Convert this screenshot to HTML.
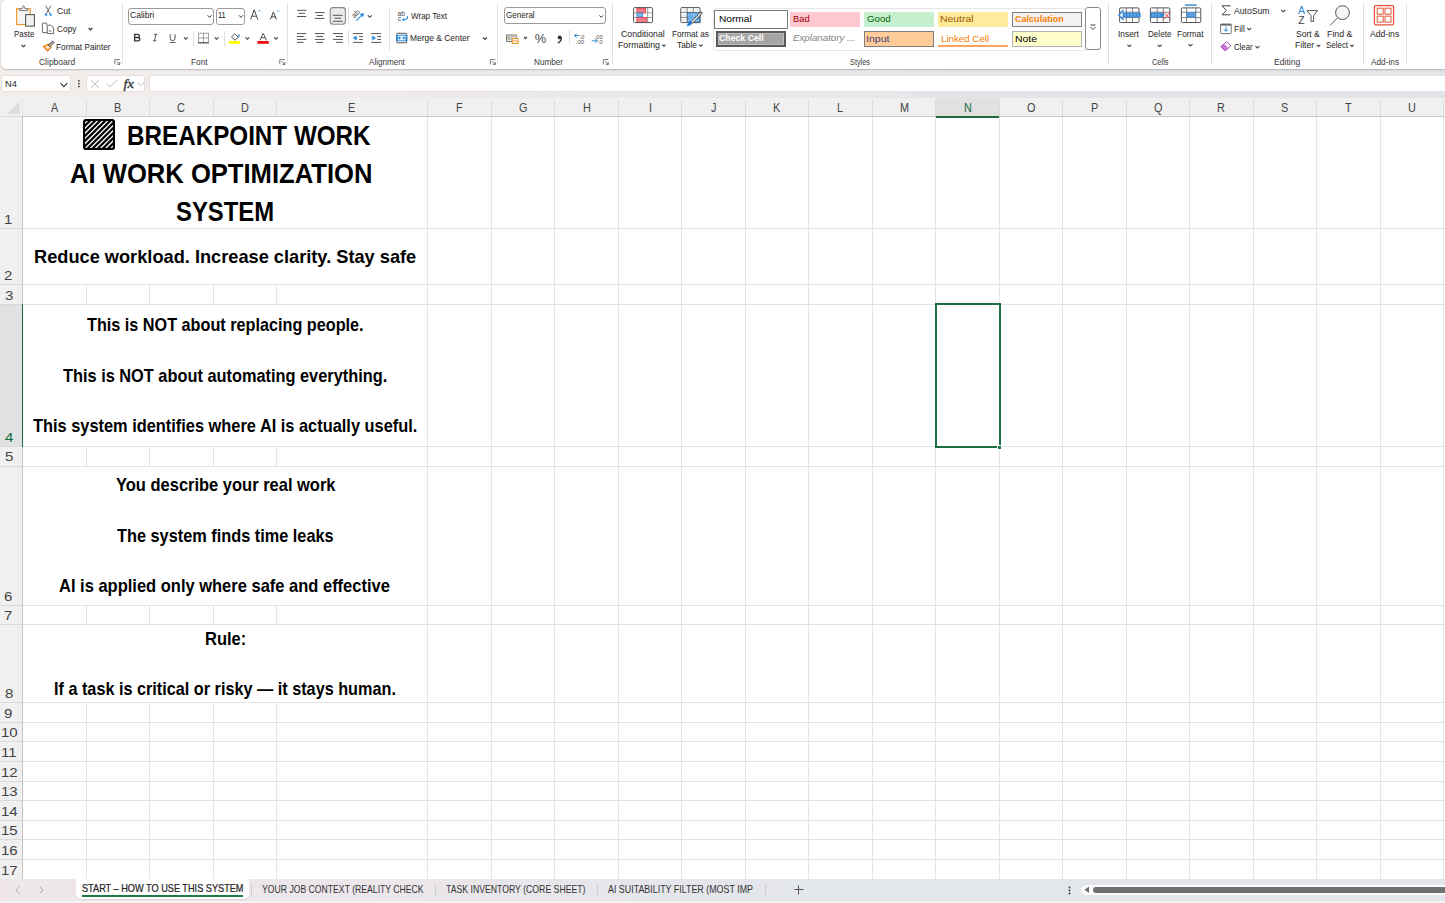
<!DOCTYPE html><html><head><meta charset="utf-8"><style>
*{box-sizing:border-box}
html,body{margin:0;padding:0;width:1445px;height:903px;overflow:hidden;background:#fff;font-family:"Liberation Sans",sans-serif}
.t{position:absolute;white-space:pre;transform-origin:0 0}
.a{position:absolute}
.sep{position:absolute;width:1px;background:#e0e0e0}
svg{position:absolute;overflow:visible}
</style></head><body>
<div class="a" style="left:0;top:0;width:1445px;height:117px;background:linear-gradient(90deg,#f3eeea 0%,#efe9e9 30%,#e9e7ec 55%,#e2e5ea 70%,#e2e5ea 100%)"></div>
<div class="a" style="left:1px;top:0px;width:1460px;height:69px;background:#fff;border-radius:5px 0 0 5px;box-shadow:0 0.6px 1.6px rgba(0,0,0,0.22)"></div>
<div class="a" style="left:1px;top:75px;width:70.3px;height:17.3px;background:#fff;border:1px solid #e4e0dd;border-radius:3px"></div>
<div class="a" style="left:86.3px;top:75px;width:59px;height:17.3px;background:#fff;border:1px solid #e4e0dd;border-radius:3px"></div>
<div class="a" style="left:149.2px;top:75px;width:1300px;height:17.3px;background:#fff;border:1px solid #e4e2e4;border-radius:3px"></div>
<div class="a" style="left:0;top:98px;width:1445px;height:19px;background:#f0f0f0"></div>
<div class="a" style="left:0;top:117px;width:22.5px;height:762px;background:#f0f0f0"></div>
<div class="a" style="left:935.8px;top:98px;width:63.5px;height:19px;background:#e1e1e1"></div>
<div class="a" style="left:0;top:304.4px;width:22.5px;height:142.20000000000005px;background:#e1e1e1"></div>
<svg style="left:0;top:98px" width="22" height="19"><polygon points="19.8,3.2 19.8,16 6.5,16" fill="#dddddd"/></svg>
<div class="a" style="left:85.50px;top:100px;width:1px;height:16px;background:#dcdcdc"></div>
<div class="a" style="left:85.50px;top:284.40px;width:1px;height:20.00px;background:#e4e4e4"></div>
<div class="a" style="left:85.50px;top:446.60px;width:1px;height:19.40px;background:#e4e4e4"></div>
<div class="a" style="left:85.50px;top:605.60px;width:1px;height:18.90px;background:#e4e4e4"></div>
<div class="a" style="left:85.50px;top:702.70px;width:1px;height:19.60px;background:#e4e4e4"></div>
<div class="a" style="left:85.50px;top:722.30px;width:1px;height:19.60px;background:#e4e4e4"></div>
<div class="a" style="left:85.50px;top:741.90px;width:1px;height:19.60px;background:#e4e4e4"></div>
<div class="a" style="left:85.50px;top:761.50px;width:1px;height:19.60px;background:#e4e4e4"></div>
<div class="a" style="left:85.50px;top:781.10px;width:1px;height:19.60px;background:#e4e4e4"></div>
<div class="a" style="left:85.50px;top:800.70px;width:1px;height:19.60px;background:#e4e4e4"></div>
<div class="a" style="left:85.50px;top:820.30px;width:1px;height:19.60px;background:#e4e4e4"></div>
<div class="a" style="left:85.50px;top:839.90px;width:1px;height:19.60px;background:#e4e4e4"></div>
<div class="a" style="left:85.50px;top:859.50px;width:1px;height:19.60px;background:#e4e4e4"></div>
<div class="a" style="left:149.00px;top:100px;width:1px;height:16px;background:#dcdcdc"></div>
<div class="a" style="left:149.00px;top:284.40px;width:1px;height:20.00px;background:#e4e4e4"></div>
<div class="a" style="left:149.00px;top:446.60px;width:1px;height:19.40px;background:#e4e4e4"></div>
<div class="a" style="left:149.00px;top:605.60px;width:1px;height:18.90px;background:#e4e4e4"></div>
<div class="a" style="left:149.00px;top:702.70px;width:1px;height:19.60px;background:#e4e4e4"></div>
<div class="a" style="left:149.00px;top:722.30px;width:1px;height:19.60px;background:#e4e4e4"></div>
<div class="a" style="left:149.00px;top:741.90px;width:1px;height:19.60px;background:#e4e4e4"></div>
<div class="a" style="left:149.00px;top:761.50px;width:1px;height:19.60px;background:#e4e4e4"></div>
<div class="a" style="left:149.00px;top:781.10px;width:1px;height:19.60px;background:#e4e4e4"></div>
<div class="a" style="left:149.00px;top:800.70px;width:1px;height:19.60px;background:#e4e4e4"></div>
<div class="a" style="left:149.00px;top:820.30px;width:1px;height:19.60px;background:#e4e4e4"></div>
<div class="a" style="left:149.00px;top:839.90px;width:1px;height:19.60px;background:#e4e4e4"></div>
<div class="a" style="left:149.00px;top:859.50px;width:1px;height:19.60px;background:#e4e4e4"></div>
<div class="a" style="left:212.50px;top:100px;width:1px;height:16px;background:#dcdcdc"></div>
<div class="a" style="left:212.50px;top:284.40px;width:1px;height:20.00px;background:#e4e4e4"></div>
<div class="a" style="left:212.50px;top:446.60px;width:1px;height:19.40px;background:#e4e4e4"></div>
<div class="a" style="left:212.50px;top:605.60px;width:1px;height:18.90px;background:#e4e4e4"></div>
<div class="a" style="left:212.50px;top:702.70px;width:1px;height:19.60px;background:#e4e4e4"></div>
<div class="a" style="left:212.50px;top:722.30px;width:1px;height:19.60px;background:#e4e4e4"></div>
<div class="a" style="left:212.50px;top:741.90px;width:1px;height:19.60px;background:#e4e4e4"></div>
<div class="a" style="left:212.50px;top:761.50px;width:1px;height:19.60px;background:#e4e4e4"></div>
<div class="a" style="left:212.50px;top:781.10px;width:1px;height:19.60px;background:#e4e4e4"></div>
<div class="a" style="left:212.50px;top:800.70px;width:1px;height:19.60px;background:#e4e4e4"></div>
<div class="a" style="left:212.50px;top:820.30px;width:1px;height:19.60px;background:#e4e4e4"></div>
<div class="a" style="left:212.50px;top:839.90px;width:1px;height:19.60px;background:#e4e4e4"></div>
<div class="a" style="left:212.50px;top:859.50px;width:1px;height:19.60px;background:#e4e4e4"></div>
<div class="a" style="left:276.00px;top:100px;width:1px;height:16px;background:#dcdcdc"></div>
<div class="a" style="left:276.00px;top:284.40px;width:1px;height:20.00px;background:#e4e4e4"></div>
<div class="a" style="left:276.00px;top:446.60px;width:1px;height:19.40px;background:#e4e4e4"></div>
<div class="a" style="left:276.00px;top:605.60px;width:1px;height:18.90px;background:#e4e4e4"></div>
<div class="a" style="left:276.00px;top:702.70px;width:1px;height:19.60px;background:#e4e4e4"></div>
<div class="a" style="left:276.00px;top:722.30px;width:1px;height:19.60px;background:#e4e4e4"></div>
<div class="a" style="left:276.00px;top:741.90px;width:1px;height:19.60px;background:#e4e4e4"></div>
<div class="a" style="left:276.00px;top:761.50px;width:1px;height:19.60px;background:#e4e4e4"></div>
<div class="a" style="left:276.00px;top:781.10px;width:1px;height:19.60px;background:#e4e4e4"></div>
<div class="a" style="left:276.00px;top:800.70px;width:1px;height:19.60px;background:#e4e4e4"></div>
<div class="a" style="left:276.00px;top:820.30px;width:1px;height:19.60px;background:#e4e4e4"></div>
<div class="a" style="left:276.00px;top:839.90px;width:1px;height:19.60px;background:#e4e4e4"></div>
<div class="a" style="left:276.00px;top:859.50px;width:1px;height:19.60px;background:#e4e4e4"></div>
<div class="a" style="left:427.30px;top:100px;width:1px;height:16px;background:#dcdcdc"></div>
<div class="a" style="left:427.30px;top:116.50px;width:1px;height:111.80px;background:#e4e4e4"></div>
<div class="a" style="left:427.30px;top:228.30px;width:1px;height:56.10px;background:#e4e4e4"></div>
<div class="a" style="left:427.30px;top:284.40px;width:1px;height:20.00px;background:#e4e4e4"></div>
<div class="a" style="left:427.30px;top:304.40px;width:1px;height:142.20px;background:#e4e4e4"></div>
<div class="a" style="left:427.30px;top:446.60px;width:1px;height:19.40px;background:#e4e4e4"></div>
<div class="a" style="left:427.30px;top:466.00px;width:1px;height:139.60px;background:#e4e4e4"></div>
<div class="a" style="left:427.30px;top:605.60px;width:1px;height:18.90px;background:#e4e4e4"></div>
<div class="a" style="left:427.30px;top:624.50px;width:1px;height:78.20px;background:#e4e4e4"></div>
<div class="a" style="left:427.30px;top:702.70px;width:1px;height:19.60px;background:#e4e4e4"></div>
<div class="a" style="left:427.30px;top:722.30px;width:1px;height:19.60px;background:#e4e4e4"></div>
<div class="a" style="left:427.30px;top:741.90px;width:1px;height:19.60px;background:#e4e4e4"></div>
<div class="a" style="left:427.30px;top:761.50px;width:1px;height:19.60px;background:#e4e4e4"></div>
<div class="a" style="left:427.30px;top:781.10px;width:1px;height:19.60px;background:#e4e4e4"></div>
<div class="a" style="left:427.30px;top:800.70px;width:1px;height:19.60px;background:#e4e4e4"></div>
<div class="a" style="left:427.30px;top:820.30px;width:1px;height:19.60px;background:#e4e4e4"></div>
<div class="a" style="left:427.30px;top:839.90px;width:1px;height:19.60px;background:#e4e4e4"></div>
<div class="a" style="left:427.30px;top:859.50px;width:1px;height:19.60px;background:#e4e4e4"></div>
<div class="a" style="left:490.80px;top:100px;width:1px;height:16px;background:#dcdcdc"></div>
<div class="a" style="left:490.80px;top:116.50px;width:1px;height:111.80px;background:#e4e4e4"></div>
<div class="a" style="left:490.80px;top:228.30px;width:1px;height:56.10px;background:#e4e4e4"></div>
<div class="a" style="left:490.80px;top:284.40px;width:1px;height:20.00px;background:#e4e4e4"></div>
<div class="a" style="left:490.80px;top:304.40px;width:1px;height:142.20px;background:#e4e4e4"></div>
<div class="a" style="left:490.80px;top:446.60px;width:1px;height:19.40px;background:#e4e4e4"></div>
<div class="a" style="left:490.80px;top:466.00px;width:1px;height:139.60px;background:#e4e4e4"></div>
<div class="a" style="left:490.80px;top:605.60px;width:1px;height:18.90px;background:#e4e4e4"></div>
<div class="a" style="left:490.80px;top:624.50px;width:1px;height:78.20px;background:#e4e4e4"></div>
<div class="a" style="left:490.80px;top:702.70px;width:1px;height:19.60px;background:#e4e4e4"></div>
<div class="a" style="left:490.80px;top:722.30px;width:1px;height:19.60px;background:#e4e4e4"></div>
<div class="a" style="left:490.80px;top:741.90px;width:1px;height:19.60px;background:#e4e4e4"></div>
<div class="a" style="left:490.80px;top:761.50px;width:1px;height:19.60px;background:#e4e4e4"></div>
<div class="a" style="left:490.80px;top:781.10px;width:1px;height:19.60px;background:#e4e4e4"></div>
<div class="a" style="left:490.80px;top:800.70px;width:1px;height:19.60px;background:#e4e4e4"></div>
<div class="a" style="left:490.80px;top:820.30px;width:1px;height:19.60px;background:#e4e4e4"></div>
<div class="a" style="left:490.80px;top:839.90px;width:1px;height:19.60px;background:#e4e4e4"></div>
<div class="a" style="left:490.80px;top:859.50px;width:1px;height:19.60px;background:#e4e4e4"></div>
<div class="a" style="left:554.30px;top:100px;width:1px;height:16px;background:#dcdcdc"></div>
<div class="a" style="left:554.30px;top:116.50px;width:1px;height:111.80px;background:#e4e4e4"></div>
<div class="a" style="left:554.30px;top:228.30px;width:1px;height:56.10px;background:#e4e4e4"></div>
<div class="a" style="left:554.30px;top:284.40px;width:1px;height:20.00px;background:#e4e4e4"></div>
<div class="a" style="left:554.30px;top:304.40px;width:1px;height:142.20px;background:#e4e4e4"></div>
<div class="a" style="left:554.30px;top:446.60px;width:1px;height:19.40px;background:#e4e4e4"></div>
<div class="a" style="left:554.30px;top:466.00px;width:1px;height:139.60px;background:#e4e4e4"></div>
<div class="a" style="left:554.30px;top:605.60px;width:1px;height:18.90px;background:#e4e4e4"></div>
<div class="a" style="left:554.30px;top:624.50px;width:1px;height:78.20px;background:#e4e4e4"></div>
<div class="a" style="left:554.30px;top:702.70px;width:1px;height:19.60px;background:#e4e4e4"></div>
<div class="a" style="left:554.30px;top:722.30px;width:1px;height:19.60px;background:#e4e4e4"></div>
<div class="a" style="left:554.30px;top:741.90px;width:1px;height:19.60px;background:#e4e4e4"></div>
<div class="a" style="left:554.30px;top:761.50px;width:1px;height:19.60px;background:#e4e4e4"></div>
<div class="a" style="left:554.30px;top:781.10px;width:1px;height:19.60px;background:#e4e4e4"></div>
<div class="a" style="left:554.30px;top:800.70px;width:1px;height:19.60px;background:#e4e4e4"></div>
<div class="a" style="left:554.30px;top:820.30px;width:1px;height:19.60px;background:#e4e4e4"></div>
<div class="a" style="left:554.30px;top:839.90px;width:1px;height:19.60px;background:#e4e4e4"></div>
<div class="a" style="left:554.30px;top:859.50px;width:1px;height:19.60px;background:#e4e4e4"></div>
<div class="a" style="left:617.80px;top:100px;width:1px;height:16px;background:#dcdcdc"></div>
<div class="a" style="left:617.80px;top:116.50px;width:1px;height:111.80px;background:#e4e4e4"></div>
<div class="a" style="left:617.80px;top:228.30px;width:1px;height:56.10px;background:#e4e4e4"></div>
<div class="a" style="left:617.80px;top:284.40px;width:1px;height:20.00px;background:#e4e4e4"></div>
<div class="a" style="left:617.80px;top:304.40px;width:1px;height:142.20px;background:#e4e4e4"></div>
<div class="a" style="left:617.80px;top:446.60px;width:1px;height:19.40px;background:#e4e4e4"></div>
<div class="a" style="left:617.80px;top:466.00px;width:1px;height:139.60px;background:#e4e4e4"></div>
<div class="a" style="left:617.80px;top:605.60px;width:1px;height:18.90px;background:#e4e4e4"></div>
<div class="a" style="left:617.80px;top:624.50px;width:1px;height:78.20px;background:#e4e4e4"></div>
<div class="a" style="left:617.80px;top:702.70px;width:1px;height:19.60px;background:#e4e4e4"></div>
<div class="a" style="left:617.80px;top:722.30px;width:1px;height:19.60px;background:#e4e4e4"></div>
<div class="a" style="left:617.80px;top:741.90px;width:1px;height:19.60px;background:#e4e4e4"></div>
<div class="a" style="left:617.80px;top:761.50px;width:1px;height:19.60px;background:#e4e4e4"></div>
<div class="a" style="left:617.80px;top:781.10px;width:1px;height:19.60px;background:#e4e4e4"></div>
<div class="a" style="left:617.80px;top:800.70px;width:1px;height:19.60px;background:#e4e4e4"></div>
<div class="a" style="left:617.80px;top:820.30px;width:1px;height:19.60px;background:#e4e4e4"></div>
<div class="a" style="left:617.80px;top:839.90px;width:1px;height:19.60px;background:#e4e4e4"></div>
<div class="a" style="left:617.80px;top:859.50px;width:1px;height:19.60px;background:#e4e4e4"></div>
<div class="a" style="left:681.30px;top:100px;width:1px;height:16px;background:#dcdcdc"></div>
<div class="a" style="left:681.30px;top:116.50px;width:1px;height:111.80px;background:#e4e4e4"></div>
<div class="a" style="left:681.30px;top:228.30px;width:1px;height:56.10px;background:#e4e4e4"></div>
<div class="a" style="left:681.30px;top:284.40px;width:1px;height:20.00px;background:#e4e4e4"></div>
<div class="a" style="left:681.30px;top:304.40px;width:1px;height:142.20px;background:#e4e4e4"></div>
<div class="a" style="left:681.30px;top:446.60px;width:1px;height:19.40px;background:#e4e4e4"></div>
<div class="a" style="left:681.30px;top:466.00px;width:1px;height:139.60px;background:#e4e4e4"></div>
<div class="a" style="left:681.30px;top:605.60px;width:1px;height:18.90px;background:#e4e4e4"></div>
<div class="a" style="left:681.30px;top:624.50px;width:1px;height:78.20px;background:#e4e4e4"></div>
<div class="a" style="left:681.30px;top:702.70px;width:1px;height:19.60px;background:#e4e4e4"></div>
<div class="a" style="left:681.30px;top:722.30px;width:1px;height:19.60px;background:#e4e4e4"></div>
<div class="a" style="left:681.30px;top:741.90px;width:1px;height:19.60px;background:#e4e4e4"></div>
<div class="a" style="left:681.30px;top:761.50px;width:1px;height:19.60px;background:#e4e4e4"></div>
<div class="a" style="left:681.30px;top:781.10px;width:1px;height:19.60px;background:#e4e4e4"></div>
<div class="a" style="left:681.30px;top:800.70px;width:1px;height:19.60px;background:#e4e4e4"></div>
<div class="a" style="left:681.30px;top:820.30px;width:1px;height:19.60px;background:#e4e4e4"></div>
<div class="a" style="left:681.30px;top:839.90px;width:1px;height:19.60px;background:#e4e4e4"></div>
<div class="a" style="left:681.30px;top:859.50px;width:1px;height:19.60px;background:#e4e4e4"></div>
<div class="a" style="left:744.80px;top:100px;width:1px;height:16px;background:#dcdcdc"></div>
<div class="a" style="left:744.80px;top:116.50px;width:1px;height:111.80px;background:#e4e4e4"></div>
<div class="a" style="left:744.80px;top:228.30px;width:1px;height:56.10px;background:#e4e4e4"></div>
<div class="a" style="left:744.80px;top:284.40px;width:1px;height:20.00px;background:#e4e4e4"></div>
<div class="a" style="left:744.80px;top:304.40px;width:1px;height:142.20px;background:#e4e4e4"></div>
<div class="a" style="left:744.80px;top:446.60px;width:1px;height:19.40px;background:#e4e4e4"></div>
<div class="a" style="left:744.80px;top:466.00px;width:1px;height:139.60px;background:#e4e4e4"></div>
<div class="a" style="left:744.80px;top:605.60px;width:1px;height:18.90px;background:#e4e4e4"></div>
<div class="a" style="left:744.80px;top:624.50px;width:1px;height:78.20px;background:#e4e4e4"></div>
<div class="a" style="left:744.80px;top:702.70px;width:1px;height:19.60px;background:#e4e4e4"></div>
<div class="a" style="left:744.80px;top:722.30px;width:1px;height:19.60px;background:#e4e4e4"></div>
<div class="a" style="left:744.80px;top:741.90px;width:1px;height:19.60px;background:#e4e4e4"></div>
<div class="a" style="left:744.80px;top:761.50px;width:1px;height:19.60px;background:#e4e4e4"></div>
<div class="a" style="left:744.80px;top:781.10px;width:1px;height:19.60px;background:#e4e4e4"></div>
<div class="a" style="left:744.80px;top:800.70px;width:1px;height:19.60px;background:#e4e4e4"></div>
<div class="a" style="left:744.80px;top:820.30px;width:1px;height:19.60px;background:#e4e4e4"></div>
<div class="a" style="left:744.80px;top:839.90px;width:1px;height:19.60px;background:#e4e4e4"></div>
<div class="a" style="left:744.80px;top:859.50px;width:1px;height:19.60px;background:#e4e4e4"></div>
<div class="a" style="left:808.30px;top:100px;width:1px;height:16px;background:#dcdcdc"></div>
<div class="a" style="left:808.30px;top:116.50px;width:1px;height:111.80px;background:#e4e4e4"></div>
<div class="a" style="left:808.30px;top:228.30px;width:1px;height:56.10px;background:#e4e4e4"></div>
<div class="a" style="left:808.30px;top:284.40px;width:1px;height:20.00px;background:#e4e4e4"></div>
<div class="a" style="left:808.30px;top:304.40px;width:1px;height:142.20px;background:#e4e4e4"></div>
<div class="a" style="left:808.30px;top:446.60px;width:1px;height:19.40px;background:#e4e4e4"></div>
<div class="a" style="left:808.30px;top:466.00px;width:1px;height:139.60px;background:#e4e4e4"></div>
<div class="a" style="left:808.30px;top:605.60px;width:1px;height:18.90px;background:#e4e4e4"></div>
<div class="a" style="left:808.30px;top:624.50px;width:1px;height:78.20px;background:#e4e4e4"></div>
<div class="a" style="left:808.30px;top:702.70px;width:1px;height:19.60px;background:#e4e4e4"></div>
<div class="a" style="left:808.30px;top:722.30px;width:1px;height:19.60px;background:#e4e4e4"></div>
<div class="a" style="left:808.30px;top:741.90px;width:1px;height:19.60px;background:#e4e4e4"></div>
<div class="a" style="left:808.30px;top:761.50px;width:1px;height:19.60px;background:#e4e4e4"></div>
<div class="a" style="left:808.30px;top:781.10px;width:1px;height:19.60px;background:#e4e4e4"></div>
<div class="a" style="left:808.30px;top:800.70px;width:1px;height:19.60px;background:#e4e4e4"></div>
<div class="a" style="left:808.30px;top:820.30px;width:1px;height:19.60px;background:#e4e4e4"></div>
<div class="a" style="left:808.30px;top:839.90px;width:1px;height:19.60px;background:#e4e4e4"></div>
<div class="a" style="left:808.30px;top:859.50px;width:1px;height:19.60px;background:#e4e4e4"></div>
<div class="a" style="left:871.80px;top:100px;width:1px;height:16px;background:#dcdcdc"></div>
<div class="a" style="left:871.80px;top:116.50px;width:1px;height:111.80px;background:#e4e4e4"></div>
<div class="a" style="left:871.80px;top:228.30px;width:1px;height:56.10px;background:#e4e4e4"></div>
<div class="a" style="left:871.80px;top:284.40px;width:1px;height:20.00px;background:#e4e4e4"></div>
<div class="a" style="left:871.80px;top:304.40px;width:1px;height:142.20px;background:#e4e4e4"></div>
<div class="a" style="left:871.80px;top:446.60px;width:1px;height:19.40px;background:#e4e4e4"></div>
<div class="a" style="left:871.80px;top:466.00px;width:1px;height:139.60px;background:#e4e4e4"></div>
<div class="a" style="left:871.80px;top:605.60px;width:1px;height:18.90px;background:#e4e4e4"></div>
<div class="a" style="left:871.80px;top:624.50px;width:1px;height:78.20px;background:#e4e4e4"></div>
<div class="a" style="left:871.80px;top:702.70px;width:1px;height:19.60px;background:#e4e4e4"></div>
<div class="a" style="left:871.80px;top:722.30px;width:1px;height:19.60px;background:#e4e4e4"></div>
<div class="a" style="left:871.80px;top:741.90px;width:1px;height:19.60px;background:#e4e4e4"></div>
<div class="a" style="left:871.80px;top:761.50px;width:1px;height:19.60px;background:#e4e4e4"></div>
<div class="a" style="left:871.80px;top:781.10px;width:1px;height:19.60px;background:#e4e4e4"></div>
<div class="a" style="left:871.80px;top:800.70px;width:1px;height:19.60px;background:#e4e4e4"></div>
<div class="a" style="left:871.80px;top:820.30px;width:1px;height:19.60px;background:#e4e4e4"></div>
<div class="a" style="left:871.80px;top:839.90px;width:1px;height:19.60px;background:#e4e4e4"></div>
<div class="a" style="left:871.80px;top:859.50px;width:1px;height:19.60px;background:#e4e4e4"></div>
<div class="a" style="left:935.30px;top:100px;width:1px;height:16px;background:#dcdcdc"></div>
<div class="a" style="left:935.30px;top:116.50px;width:1px;height:111.80px;background:#e4e4e4"></div>
<div class="a" style="left:935.30px;top:228.30px;width:1px;height:56.10px;background:#e4e4e4"></div>
<div class="a" style="left:935.30px;top:284.40px;width:1px;height:20.00px;background:#e4e4e4"></div>
<div class="a" style="left:935.30px;top:304.40px;width:1px;height:142.20px;background:#e4e4e4"></div>
<div class="a" style="left:935.30px;top:446.60px;width:1px;height:19.40px;background:#e4e4e4"></div>
<div class="a" style="left:935.30px;top:466.00px;width:1px;height:139.60px;background:#e4e4e4"></div>
<div class="a" style="left:935.30px;top:605.60px;width:1px;height:18.90px;background:#e4e4e4"></div>
<div class="a" style="left:935.30px;top:624.50px;width:1px;height:78.20px;background:#e4e4e4"></div>
<div class="a" style="left:935.30px;top:702.70px;width:1px;height:19.60px;background:#e4e4e4"></div>
<div class="a" style="left:935.30px;top:722.30px;width:1px;height:19.60px;background:#e4e4e4"></div>
<div class="a" style="left:935.30px;top:741.90px;width:1px;height:19.60px;background:#e4e4e4"></div>
<div class="a" style="left:935.30px;top:761.50px;width:1px;height:19.60px;background:#e4e4e4"></div>
<div class="a" style="left:935.30px;top:781.10px;width:1px;height:19.60px;background:#e4e4e4"></div>
<div class="a" style="left:935.30px;top:800.70px;width:1px;height:19.60px;background:#e4e4e4"></div>
<div class="a" style="left:935.30px;top:820.30px;width:1px;height:19.60px;background:#e4e4e4"></div>
<div class="a" style="left:935.30px;top:839.90px;width:1px;height:19.60px;background:#e4e4e4"></div>
<div class="a" style="left:935.30px;top:859.50px;width:1px;height:19.60px;background:#e4e4e4"></div>
<div class="a" style="left:998.80px;top:100px;width:1px;height:16px;background:#dcdcdc"></div>
<div class="a" style="left:998.80px;top:116.50px;width:1px;height:111.80px;background:#e4e4e4"></div>
<div class="a" style="left:998.80px;top:228.30px;width:1px;height:56.10px;background:#e4e4e4"></div>
<div class="a" style="left:998.80px;top:284.40px;width:1px;height:20.00px;background:#e4e4e4"></div>
<div class="a" style="left:998.80px;top:304.40px;width:1px;height:142.20px;background:#e4e4e4"></div>
<div class="a" style="left:998.80px;top:446.60px;width:1px;height:19.40px;background:#e4e4e4"></div>
<div class="a" style="left:998.80px;top:466.00px;width:1px;height:139.60px;background:#e4e4e4"></div>
<div class="a" style="left:998.80px;top:605.60px;width:1px;height:18.90px;background:#e4e4e4"></div>
<div class="a" style="left:998.80px;top:624.50px;width:1px;height:78.20px;background:#e4e4e4"></div>
<div class="a" style="left:998.80px;top:702.70px;width:1px;height:19.60px;background:#e4e4e4"></div>
<div class="a" style="left:998.80px;top:722.30px;width:1px;height:19.60px;background:#e4e4e4"></div>
<div class="a" style="left:998.80px;top:741.90px;width:1px;height:19.60px;background:#e4e4e4"></div>
<div class="a" style="left:998.80px;top:761.50px;width:1px;height:19.60px;background:#e4e4e4"></div>
<div class="a" style="left:998.80px;top:781.10px;width:1px;height:19.60px;background:#e4e4e4"></div>
<div class="a" style="left:998.80px;top:800.70px;width:1px;height:19.60px;background:#e4e4e4"></div>
<div class="a" style="left:998.80px;top:820.30px;width:1px;height:19.60px;background:#e4e4e4"></div>
<div class="a" style="left:998.80px;top:839.90px;width:1px;height:19.60px;background:#e4e4e4"></div>
<div class="a" style="left:998.80px;top:859.50px;width:1px;height:19.60px;background:#e4e4e4"></div>
<div class="a" style="left:1062.30px;top:100px;width:1px;height:16px;background:#dcdcdc"></div>
<div class="a" style="left:1062.30px;top:116.50px;width:1px;height:111.80px;background:#e4e4e4"></div>
<div class="a" style="left:1062.30px;top:228.30px;width:1px;height:56.10px;background:#e4e4e4"></div>
<div class="a" style="left:1062.30px;top:284.40px;width:1px;height:20.00px;background:#e4e4e4"></div>
<div class="a" style="left:1062.30px;top:304.40px;width:1px;height:142.20px;background:#e4e4e4"></div>
<div class="a" style="left:1062.30px;top:446.60px;width:1px;height:19.40px;background:#e4e4e4"></div>
<div class="a" style="left:1062.30px;top:466.00px;width:1px;height:139.60px;background:#e4e4e4"></div>
<div class="a" style="left:1062.30px;top:605.60px;width:1px;height:18.90px;background:#e4e4e4"></div>
<div class="a" style="left:1062.30px;top:624.50px;width:1px;height:78.20px;background:#e4e4e4"></div>
<div class="a" style="left:1062.30px;top:702.70px;width:1px;height:19.60px;background:#e4e4e4"></div>
<div class="a" style="left:1062.30px;top:722.30px;width:1px;height:19.60px;background:#e4e4e4"></div>
<div class="a" style="left:1062.30px;top:741.90px;width:1px;height:19.60px;background:#e4e4e4"></div>
<div class="a" style="left:1062.30px;top:761.50px;width:1px;height:19.60px;background:#e4e4e4"></div>
<div class="a" style="left:1062.30px;top:781.10px;width:1px;height:19.60px;background:#e4e4e4"></div>
<div class="a" style="left:1062.30px;top:800.70px;width:1px;height:19.60px;background:#e4e4e4"></div>
<div class="a" style="left:1062.30px;top:820.30px;width:1px;height:19.60px;background:#e4e4e4"></div>
<div class="a" style="left:1062.30px;top:839.90px;width:1px;height:19.60px;background:#e4e4e4"></div>
<div class="a" style="left:1062.30px;top:859.50px;width:1px;height:19.60px;background:#e4e4e4"></div>
<div class="a" style="left:1125.80px;top:100px;width:1px;height:16px;background:#dcdcdc"></div>
<div class="a" style="left:1125.80px;top:116.50px;width:1px;height:111.80px;background:#e4e4e4"></div>
<div class="a" style="left:1125.80px;top:228.30px;width:1px;height:56.10px;background:#e4e4e4"></div>
<div class="a" style="left:1125.80px;top:284.40px;width:1px;height:20.00px;background:#e4e4e4"></div>
<div class="a" style="left:1125.80px;top:304.40px;width:1px;height:142.20px;background:#e4e4e4"></div>
<div class="a" style="left:1125.80px;top:446.60px;width:1px;height:19.40px;background:#e4e4e4"></div>
<div class="a" style="left:1125.80px;top:466.00px;width:1px;height:139.60px;background:#e4e4e4"></div>
<div class="a" style="left:1125.80px;top:605.60px;width:1px;height:18.90px;background:#e4e4e4"></div>
<div class="a" style="left:1125.80px;top:624.50px;width:1px;height:78.20px;background:#e4e4e4"></div>
<div class="a" style="left:1125.80px;top:702.70px;width:1px;height:19.60px;background:#e4e4e4"></div>
<div class="a" style="left:1125.80px;top:722.30px;width:1px;height:19.60px;background:#e4e4e4"></div>
<div class="a" style="left:1125.80px;top:741.90px;width:1px;height:19.60px;background:#e4e4e4"></div>
<div class="a" style="left:1125.80px;top:761.50px;width:1px;height:19.60px;background:#e4e4e4"></div>
<div class="a" style="left:1125.80px;top:781.10px;width:1px;height:19.60px;background:#e4e4e4"></div>
<div class="a" style="left:1125.80px;top:800.70px;width:1px;height:19.60px;background:#e4e4e4"></div>
<div class="a" style="left:1125.80px;top:820.30px;width:1px;height:19.60px;background:#e4e4e4"></div>
<div class="a" style="left:1125.80px;top:839.90px;width:1px;height:19.60px;background:#e4e4e4"></div>
<div class="a" style="left:1125.80px;top:859.50px;width:1px;height:19.60px;background:#e4e4e4"></div>
<div class="a" style="left:1189.30px;top:100px;width:1px;height:16px;background:#dcdcdc"></div>
<div class="a" style="left:1189.30px;top:116.50px;width:1px;height:111.80px;background:#e4e4e4"></div>
<div class="a" style="left:1189.30px;top:228.30px;width:1px;height:56.10px;background:#e4e4e4"></div>
<div class="a" style="left:1189.30px;top:284.40px;width:1px;height:20.00px;background:#e4e4e4"></div>
<div class="a" style="left:1189.30px;top:304.40px;width:1px;height:142.20px;background:#e4e4e4"></div>
<div class="a" style="left:1189.30px;top:446.60px;width:1px;height:19.40px;background:#e4e4e4"></div>
<div class="a" style="left:1189.30px;top:466.00px;width:1px;height:139.60px;background:#e4e4e4"></div>
<div class="a" style="left:1189.30px;top:605.60px;width:1px;height:18.90px;background:#e4e4e4"></div>
<div class="a" style="left:1189.30px;top:624.50px;width:1px;height:78.20px;background:#e4e4e4"></div>
<div class="a" style="left:1189.30px;top:702.70px;width:1px;height:19.60px;background:#e4e4e4"></div>
<div class="a" style="left:1189.30px;top:722.30px;width:1px;height:19.60px;background:#e4e4e4"></div>
<div class="a" style="left:1189.30px;top:741.90px;width:1px;height:19.60px;background:#e4e4e4"></div>
<div class="a" style="left:1189.30px;top:761.50px;width:1px;height:19.60px;background:#e4e4e4"></div>
<div class="a" style="left:1189.30px;top:781.10px;width:1px;height:19.60px;background:#e4e4e4"></div>
<div class="a" style="left:1189.30px;top:800.70px;width:1px;height:19.60px;background:#e4e4e4"></div>
<div class="a" style="left:1189.30px;top:820.30px;width:1px;height:19.60px;background:#e4e4e4"></div>
<div class="a" style="left:1189.30px;top:839.90px;width:1px;height:19.60px;background:#e4e4e4"></div>
<div class="a" style="left:1189.30px;top:859.50px;width:1px;height:19.60px;background:#e4e4e4"></div>
<div class="a" style="left:1252.80px;top:100px;width:1px;height:16px;background:#dcdcdc"></div>
<div class="a" style="left:1252.80px;top:116.50px;width:1px;height:111.80px;background:#e4e4e4"></div>
<div class="a" style="left:1252.80px;top:228.30px;width:1px;height:56.10px;background:#e4e4e4"></div>
<div class="a" style="left:1252.80px;top:284.40px;width:1px;height:20.00px;background:#e4e4e4"></div>
<div class="a" style="left:1252.80px;top:304.40px;width:1px;height:142.20px;background:#e4e4e4"></div>
<div class="a" style="left:1252.80px;top:446.60px;width:1px;height:19.40px;background:#e4e4e4"></div>
<div class="a" style="left:1252.80px;top:466.00px;width:1px;height:139.60px;background:#e4e4e4"></div>
<div class="a" style="left:1252.80px;top:605.60px;width:1px;height:18.90px;background:#e4e4e4"></div>
<div class="a" style="left:1252.80px;top:624.50px;width:1px;height:78.20px;background:#e4e4e4"></div>
<div class="a" style="left:1252.80px;top:702.70px;width:1px;height:19.60px;background:#e4e4e4"></div>
<div class="a" style="left:1252.80px;top:722.30px;width:1px;height:19.60px;background:#e4e4e4"></div>
<div class="a" style="left:1252.80px;top:741.90px;width:1px;height:19.60px;background:#e4e4e4"></div>
<div class="a" style="left:1252.80px;top:761.50px;width:1px;height:19.60px;background:#e4e4e4"></div>
<div class="a" style="left:1252.80px;top:781.10px;width:1px;height:19.60px;background:#e4e4e4"></div>
<div class="a" style="left:1252.80px;top:800.70px;width:1px;height:19.60px;background:#e4e4e4"></div>
<div class="a" style="left:1252.80px;top:820.30px;width:1px;height:19.60px;background:#e4e4e4"></div>
<div class="a" style="left:1252.80px;top:839.90px;width:1px;height:19.60px;background:#e4e4e4"></div>
<div class="a" style="left:1252.80px;top:859.50px;width:1px;height:19.60px;background:#e4e4e4"></div>
<div class="a" style="left:1316.30px;top:100px;width:1px;height:16px;background:#dcdcdc"></div>
<div class="a" style="left:1316.30px;top:116.50px;width:1px;height:111.80px;background:#e4e4e4"></div>
<div class="a" style="left:1316.30px;top:228.30px;width:1px;height:56.10px;background:#e4e4e4"></div>
<div class="a" style="left:1316.30px;top:284.40px;width:1px;height:20.00px;background:#e4e4e4"></div>
<div class="a" style="left:1316.30px;top:304.40px;width:1px;height:142.20px;background:#e4e4e4"></div>
<div class="a" style="left:1316.30px;top:446.60px;width:1px;height:19.40px;background:#e4e4e4"></div>
<div class="a" style="left:1316.30px;top:466.00px;width:1px;height:139.60px;background:#e4e4e4"></div>
<div class="a" style="left:1316.30px;top:605.60px;width:1px;height:18.90px;background:#e4e4e4"></div>
<div class="a" style="left:1316.30px;top:624.50px;width:1px;height:78.20px;background:#e4e4e4"></div>
<div class="a" style="left:1316.30px;top:702.70px;width:1px;height:19.60px;background:#e4e4e4"></div>
<div class="a" style="left:1316.30px;top:722.30px;width:1px;height:19.60px;background:#e4e4e4"></div>
<div class="a" style="left:1316.30px;top:741.90px;width:1px;height:19.60px;background:#e4e4e4"></div>
<div class="a" style="left:1316.30px;top:761.50px;width:1px;height:19.60px;background:#e4e4e4"></div>
<div class="a" style="left:1316.30px;top:781.10px;width:1px;height:19.60px;background:#e4e4e4"></div>
<div class="a" style="left:1316.30px;top:800.70px;width:1px;height:19.60px;background:#e4e4e4"></div>
<div class="a" style="left:1316.30px;top:820.30px;width:1px;height:19.60px;background:#e4e4e4"></div>
<div class="a" style="left:1316.30px;top:839.90px;width:1px;height:19.60px;background:#e4e4e4"></div>
<div class="a" style="left:1316.30px;top:859.50px;width:1px;height:19.60px;background:#e4e4e4"></div>
<div class="a" style="left:1379.80px;top:100px;width:1px;height:16px;background:#dcdcdc"></div>
<div class="a" style="left:1379.80px;top:116.50px;width:1px;height:111.80px;background:#e4e4e4"></div>
<div class="a" style="left:1379.80px;top:228.30px;width:1px;height:56.10px;background:#e4e4e4"></div>
<div class="a" style="left:1379.80px;top:284.40px;width:1px;height:20.00px;background:#e4e4e4"></div>
<div class="a" style="left:1379.80px;top:304.40px;width:1px;height:142.20px;background:#e4e4e4"></div>
<div class="a" style="left:1379.80px;top:446.60px;width:1px;height:19.40px;background:#e4e4e4"></div>
<div class="a" style="left:1379.80px;top:466.00px;width:1px;height:139.60px;background:#e4e4e4"></div>
<div class="a" style="left:1379.80px;top:605.60px;width:1px;height:18.90px;background:#e4e4e4"></div>
<div class="a" style="left:1379.80px;top:624.50px;width:1px;height:78.20px;background:#e4e4e4"></div>
<div class="a" style="left:1379.80px;top:702.70px;width:1px;height:19.60px;background:#e4e4e4"></div>
<div class="a" style="left:1379.80px;top:722.30px;width:1px;height:19.60px;background:#e4e4e4"></div>
<div class="a" style="left:1379.80px;top:741.90px;width:1px;height:19.60px;background:#e4e4e4"></div>
<div class="a" style="left:1379.80px;top:761.50px;width:1px;height:19.60px;background:#e4e4e4"></div>
<div class="a" style="left:1379.80px;top:781.10px;width:1px;height:19.60px;background:#e4e4e4"></div>
<div class="a" style="left:1379.80px;top:800.70px;width:1px;height:19.60px;background:#e4e4e4"></div>
<div class="a" style="left:1379.80px;top:820.30px;width:1px;height:19.60px;background:#e4e4e4"></div>
<div class="a" style="left:1379.80px;top:839.90px;width:1px;height:19.60px;background:#e4e4e4"></div>
<div class="a" style="left:1379.80px;top:859.50px;width:1px;height:19.60px;background:#e4e4e4"></div>
<div class="a" style="left:1443.30px;top:100px;width:1px;height:16px;background:#dcdcdc"></div>
<div class="a" style="left:1443.30px;top:116.50px;width:1px;height:111.80px;background:#e4e4e4"></div>
<div class="a" style="left:1443.30px;top:228.30px;width:1px;height:56.10px;background:#e4e4e4"></div>
<div class="a" style="left:1443.30px;top:284.40px;width:1px;height:20.00px;background:#e4e4e4"></div>
<div class="a" style="left:1443.30px;top:304.40px;width:1px;height:142.20px;background:#e4e4e4"></div>
<div class="a" style="left:1443.30px;top:446.60px;width:1px;height:19.40px;background:#e4e4e4"></div>
<div class="a" style="left:1443.30px;top:466.00px;width:1px;height:139.60px;background:#e4e4e4"></div>
<div class="a" style="left:1443.30px;top:605.60px;width:1px;height:18.90px;background:#e4e4e4"></div>
<div class="a" style="left:1443.30px;top:624.50px;width:1px;height:78.20px;background:#e4e4e4"></div>
<div class="a" style="left:1443.30px;top:702.70px;width:1px;height:19.60px;background:#e4e4e4"></div>
<div class="a" style="left:1443.30px;top:722.30px;width:1px;height:19.60px;background:#e4e4e4"></div>
<div class="a" style="left:1443.30px;top:741.90px;width:1px;height:19.60px;background:#e4e4e4"></div>
<div class="a" style="left:1443.30px;top:761.50px;width:1px;height:19.60px;background:#e4e4e4"></div>
<div class="a" style="left:1443.30px;top:781.10px;width:1px;height:19.60px;background:#e4e4e4"></div>
<div class="a" style="left:1443.30px;top:800.70px;width:1px;height:19.60px;background:#e4e4e4"></div>
<div class="a" style="left:1443.30px;top:820.30px;width:1px;height:19.60px;background:#e4e4e4"></div>
<div class="a" style="left:1443.30px;top:839.90px;width:1px;height:19.60px;background:#e4e4e4"></div>
<div class="a" style="left:1443.30px;top:859.50px;width:1px;height:19.60px;background:#e4e4e4"></div>
<div class="a" style="left:22.5px;top:227.80px;width:1423px;height:1px;background:#e4e4e4"></div>
<div class="a" style="left:0;top:227.80px;width:22.5px;height:1px;background:#dadada"></div>
<div class="a" style="left:22.5px;top:283.90px;width:1423px;height:1px;background:#e4e4e4"></div>
<div class="a" style="left:0;top:283.90px;width:22.5px;height:1px;background:#dadada"></div>
<div class="a" style="left:22.5px;top:303.90px;width:1423px;height:1px;background:#e4e4e4"></div>
<div class="a" style="left:0;top:303.90px;width:22.5px;height:1px;background:#dadada"></div>
<div class="a" style="left:22.5px;top:446.10px;width:1423px;height:1px;background:#e4e4e4"></div>
<div class="a" style="left:0;top:446.10px;width:22.5px;height:1px;background:#dadada"></div>
<div class="a" style="left:22.5px;top:465.50px;width:1423px;height:1px;background:#e4e4e4"></div>
<div class="a" style="left:0;top:465.50px;width:22.5px;height:1px;background:#dadada"></div>
<div class="a" style="left:22.5px;top:605.10px;width:1423px;height:1px;background:#e4e4e4"></div>
<div class="a" style="left:0;top:605.10px;width:22.5px;height:1px;background:#dadada"></div>
<div class="a" style="left:22.5px;top:624.00px;width:1423px;height:1px;background:#e4e4e4"></div>
<div class="a" style="left:0;top:624.00px;width:22.5px;height:1px;background:#dadada"></div>
<div class="a" style="left:22.5px;top:702.20px;width:1423px;height:1px;background:#e4e4e4"></div>
<div class="a" style="left:0;top:702.20px;width:22.5px;height:1px;background:#dadada"></div>
<div class="a" style="left:22.5px;top:721.80px;width:1423px;height:1px;background:#e4e4e4"></div>
<div class="a" style="left:0;top:721.80px;width:22.5px;height:1px;background:#dadada"></div>
<div class="a" style="left:22.5px;top:741.40px;width:1423px;height:1px;background:#e4e4e4"></div>
<div class="a" style="left:0;top:741.40px;width:22.5px;height:1px;background:#dadada"></div>
<div class="a" style="left:22.5px;top:761.00px;width:1423px;height:1px;background:#e4e4e4"></div>
<div class="a" style="left:0;top:761.00px;width:22.5px;height:1px;background:#dadada"></div>
<div class="a" style="left:22.5px;top:780.60px;width:1423px;height:1px;background:#e4e4e4"></div>
<div class="a" style="left:0;top:780.60px;width:22.5px;height:1px;background:#dadada"></div>
<div class="a" style="left:22.5px;top:800.20px;width:1423px;height:1px;background:#e4e4e4"></div>
<div class="a" style="left:0;top:800.20px;width:22.5px;height:1px;background:#dadada"></div>
<div class="a" style="left:22.5px;top:819.80px;width:1423px;height:1px;background:#e4e4e4"></div>
<div class="a" style="left:0;top:819.80px;width:22.5px;height:1px;background:#dadada"></div>
<div class="a" style="left:22.5px;top:839.40px;width:1423px;height:1px;background:#e4e4e4"></div>
<div class="a" style="left:0;top:839.40px;width:22.5px;height:1px;background:#dadada"></div>
<div class="a" style="left:22.5px;top:859.00px;width:1423px;height:1px;background:#e4e4e4"></div>
<div class="a" style="left:0;top:859.00px;width:22.5px;height:1px;background:#dadada"></div>
<div class="a" style="left:22.5px;top:878.60px;width:1423px;height:1px;background:#e4e4e4"></div>
<div class="a" style="left:0;top:878.60px;width:22.5px;height:1px;background:#dadada"></div>
<div class="a" style="left:22px;top:115.8px;width:1423px;height:1.6px;background:#c9c9c9"></div>
<div class="a" style="left:0;top:116px;width:22px;height:1px;background:#dcdcdc"></div>
<div class="a" style="left:22px;top:116px;width:1px;height:763px;background:#c4c4c4"></div>
<div class="a" style="left:22px;top:98px;width:1px;height:18px;background:#e6e6e6"></div>
<div class="a" style="left:935.8px;top:115.5px;width:63.50px;height:2px;background:#1b6b3d"></div>
<div class="a" style="left:21.5px;top:304.4px;width:1.5px;height:142.20px;background:#1b6b3d"></div>
<div class="a" style="left:935px;top:303px;width:65.6px;height:144.6px;border:2px solid #1e6f41"></div>
<div class="a" style="left:997px;top:444.6px;width:5px;height:5px;background:#1e6f41;border:1px solid #fff"></div>
<svg style="left:83.3px;top:119px" width="32" height="31" viewBox="0 0 32 31">
<defs><clipPath id="cp"><rect x="1" y="1" width="30" height="29" rx="2.5"/></clipPath></defs>
<rect x="0" y="0" width="32" height="31" rx="3.5" fill="#000"/>
<g clip-path="url(#cp)" stroke="#fff" stroke-width="1.35"><line x1="8.10" y1="-2" x2="-2" y2="8.10"/><line x1="13.20" y1="-2" x2="-2" y2="13.20"/><line x1="18.30" y1="-2" x2="-2" y2="18.30"/><line x1="23.40" y1="-2" x2="-2" y2="23.40"/><line x1="28.50" y1="-2" x2="-2" y2="28.50"/><line x1="33.60" y1="-2" x2="-2" y2="33.60"/><line x1="38.70" y1="-2" x2="-2" y2="38.70"/><line x1="43.80" y1="-2" x2="-2" y2="43.80"/><line x1="48.90" y1="-2" x2="-2" y2="48.90"/><line x1="54.00" y1="-2" x2="-2" y2="54.00"/><line x1="59.10" y1="-2" x2="-2" y2="59.10"/><line x1="64.20" y1="-2" x2="-2" y2="64.20"/></g>
<rect x="1" y="1" width="30" height="29" rx="2.5" fill="none" stroke="#000" stroke-width="2"/>
</svg>
<div class="a" style="left:0;top:879px;width:1445px;height:24px;background:linear-gradient(90deg,#efe7ea 0%,#ece7eb 25%,#e6e6eb 42%,#e3e6eb 58%,#e3e6eb 100%)"></div>
<div class="a" style="left:0;top:900.6px;width:1445px;height:3px;background:#f6f4f2"></div>
<div class="a" style="left:76px;top:878.5px;width:173px;height:20px;background:#fff;border-radius:0 0 5px 5px;box-shadow:0 1px 1px rgba(0,0,0,0.08)"></div>
<div class="a" style="left:82px;top:895px;width:160.5px;height:2px;background:#1e7b46"></div>
<div class="a" style="left:250.5px;top:884px;width:1px;height:12px;background:#cfcfd2"></div>
<div class="a" style="left:435.3px;top:884px;width:1px;height:12px;background:#cfcfd2"></div>
<div class="a" style="left:597px;top:884px;width:1px;height:12px;background:#cfcfd2"></div>
<div class="a" style="left:765.3px;top:884px;width:1px;height:12px;background:#cfcfd2"></div>
<svg style="left:14px;top:885px" width="8" height="10"><polyline points="5.5,1.5 2,5 5.5,8.5" fill="none" stroke="#b0b0b0" stroke-width="1"/></svg>
<svg style="left:37px;top:885px" width="8" height="10"><polyline points="2.5,1.5 6,5 2.5,8.5" fill="none" stroke="#b0b0b0" stroke-width="1"/></svg>
<svg style="left:794px;top:885px" width="10" height="10"><path d="M4.5 0.5v9M0.5 4.5h9" stroke="#555" stroke-width="1"/></svg>
<svg style="left:1067px;top:886px" width="5" height="10"><circle cx="2.5" cy="1.5" r="0.9" fill="#333"/><circle cx="2.5" cy="4.5" r="0.9" fill="#333"/><circle cx="2.5" cy="7.5" r="0.9" fill="#333"/></svg>
<div class="a" style="left:1081px;top:884.5px;width:380px;height:10.5px;background:#fafafa;border-radius:5px"></div>
<svg style="left:1083px;top:886px" width="8" height="8"><polygon points="6,0.5 6,7 1.5,3.75" fill="#6a6a6a"/></svg>
<div class="a" style="left:1092.5px;top:887.2px;width:380px;height:6px;background:#707070;border-radius:3px"></div>
<div class="a" style="left:122.0px;top:3px;width:1px;height:61px;background:#e3e3e3"></div>
<div class="a" style="left:287.2px;top:3px;width:1px;height:61px;background:#e3e3e3"></div>
<div class="a" style="left:497.3px;top:3px;width:1px;height:61px;background:#e3e3e3"></div>
<div class="a" style="left:612.0px;top:3px;width:1px;height:61px;background:#e3e3e3"></div>
<div class="a" style="left:1108.2px;top:3px;width:1px;height:61px;background:#e3e3e3"></div>
<div class="a" style="left:1211.1px;top:3px;width:1px;height:61px;background:#e3e3e3"></div>
<div class="a" style="left:1362.5px;top:3px;width:1px;height:61px;background:#e3e3e3"></div>
<div class="a" style="left:1405.9px;top:3px;width:1px;height:61px;background:#e3e3e3"></div>
<div class="a" style="left:193.0px;top:31px;width:1px;height:15px;background:#e0e0e0"></div>
<div class="a" style="left:223.5px;top:31px;width:1px;height:15px;background:#e0e0e0"></div>
<div class="a" style="left:347.5px;top:7px;width:1px;height:17px;background:#e0e0e0"></div>
<div class="a" style="left:347.5px;top:30px;width:1px;height:16px;background:#e0e0e0"></div>
<div class="a" style="left:388.7px;top:7px;width:1px;height:43px;background:#e0e0e0"></div>
<div class="a" style="left:568.5px;top:30px;width:1px;height:14px;background:#e0e0e0"></div>
<div class="a" style="left:128.2px;top:7.6px;width:86px;height:17px;border:1px solid #9a9a9a;border-radius:3px"></div>
<div class="a" style="left:216px;top:7.6px;width:29px;height:17px;border:1px solid #9a9a9a;border-radius:3px"></div>
<div class="a" style="left:504px;top:7px;width:102px;height:17px;border:1px solid #9a9a9a;border-radius:3px"></div>
<div class="a" style="left:713px;top:8px;width:374px;height:43px;border:1px solid #e6e6e6;border-radius:3px"></div>
<div class="a" style="left:1085px;top:7px;width:16px;height:43px;border:1px solid #8a8a8a;border-radius:3px;background:#fff"></div>
<svg style="left:1089px;top:24px" width="8" height="8"><path d="M1.5 1h5M1.5 3l2.5 2.5l2.5-2.5" fill="none" stroke="#444" stroke-width="1"/></svg>
<div class="a" style="left:714px;top:10px;width:74px;height:19px;border:1.3px solid #7a7a7a;background:#fff"></div>
<div class="a" style="left:790px;top:12px;width:70px;height:15px;background:#ffc7ce"></div>
<div class="a" style="left:864px;top:12px;width:70px;height:15px;background:#c6efce"></div>
<div class="a" style="left:938px;top:12px;width:70px;height:15px;background:#ffeb9c"></div>
<div class="a" style="left:1012px;top:12px;width:70px;height:15px;background:#f2f2f2;border:1px solid #7f7f7f"></div>
<div class="a" style="left:716px;top:31px;width:70px;height:16px;background:#a5a5a5;border:2px solid #5a5a5a;box-shadow:inset 0 0 0 1px #bdbdbd"></div>
<div class="a" style="left:864px;top:31px;width:70px;height:16px;background:#ffcc99;border:1px solid #7f7f7f"></div>
<div class="a" style="left:938px;top:44.5px;width:70px;height:2px;background:#fba45e"></div>
<div class="a" style="left:1012px;top:31px;width:70px;height:16px;background:#ffffcc;border:1px solid #b2b2b2"></div>
<div class="a" style="left:330px;top:7px;width:16px;height:17px;border:1px solid #8a8a8a;border-radius:3px;background:#f0f0f0"></div>
<svg style="left:0;top:0" width="1445" height="100" viewBox="0 0 1445 100">
<g fill="none" stroke-linecap="butt">
<!-- Paste clipboard -->
<rect x="16.6" y="8.7" width="13.6" height="15.8" fill="#f4f4f4" stroke="#f29b2b" stroke-width="1.2"/>
<path d="M19.6 10.6 L19.6 8.6 L22.2 8.6 L23.6 5.6 L25.2 8.6 L27.6 8.6 L27.6 10.6 Z" fill="#f6f6f6" stroke="#6b6b6b" stroke-width="0.9"/>
<rect x="25.6" y="14.6" width="8.8" height="11.5" fill="#f2f2f2" stroke="#5a5a5a" stroke-width="1.1"/>
<path d="M21.6 45 L23.4 46.8 L25.2 45" stroke="#444" stroke-width="0.9"/>
<!-- Cut -->
<path d="M46.6 13.2 L50.8 5.6 M49.8 13.2 L45.6 5.6" stroke="#555" stroke-width="0.9"/>
<circle cx="46" cy="14.6" r="1.3" fill="#3a94e0"/><circle cx="50.5" cy="14.6" r="1.3" fill="#3a94e0"/>
<!-- Copy -->
<path d="M47 32.6 L43 32.6 Q42.4 32.6 42.4 32 L42.4 23.7 Q42.4 23.1 43 23.1 L46.6 23.1 L46.6 25" stroke="#5a5a5a" stroke-width="0.9"/>
<path d="M47.3 25.2 L51 25.2 L53.6 27.8 L53.6 33.6 L47.3 33.6 Z" fill="#fff" stroke="#5a5a5a" stroke-width="0.9"/>
<rect x="48.8" y="30" width="2.6" height="1.8" fill="#aaa" stroke="none"/>
<path d="M88.7 28 L90.5 29.8 L92.3 28" stroke="#333" stroke-width="1.2"/>
<!-- Format painter -->
<path d="M42.9 46.4 L49.4 43.6 L51.4 47.6 L47.6 51.4 Z" fill="#ee8a1e" stroke="#ee8a1e" stroke-width="0.8" stroke-linejoin="round"/>
<path d="M45.2 46.8 L49 45.2 L50 47.4 L47.6 49.6 Z" fill="#fff3e0" stroke="none"/>
<path d="M48.8 46.2 L53.6 41.6" stroke="#444" stroke-width="2.8"/>
<path d="M49.2 45.8 L53.2 42" stroke="#c8c8c8" stroke-width="1.2"/>
<!-- launchers -->
<g stroke="#555" stroke-width="0.8">
<path d="M114.8 64.3 L114.8 59.6 L119.8 59.6 M116.6 61.4 L119.8 64.4 M117.4 64.4 L119.8 64.4 L119.8 62"/>
<path d="M279.8 64.3 L279.8 59.6 L284.8 59.6 M281.6 61.4 L284.8 64.4 M282.4 64.4 L284.8 64.4 L284.8 62"/>
<path d="M490.3 64.3 L490.3 59.6 L495.3 59.6 M492.1 61.4 L495.3 64.4 M492.9 64.4 L495.3 64.4 L495.3 62"/>
<path d="M603.3 64.3 L603.3 59.6 L608.3 59.6 M605.1 61.4 L608.3 64.4 M605.9 64.4 L608.3 64.4 L608.3 62"/>
</g>
<!-- font dropdown chevrons -->
<path d="M207.6 15.3 L209.6 17.3 L211.6 15.3" stroke="#333" stroke-width="1"/>
<path d="M239 15.3 L241 17.3 L243 15.3" stroke="#333" stroke-width="1"/>
<path d="M599.3 15.4 L601.2 17.3 L603.1 15.4" stroke="#333" stroke-width="1"/>
<!-- grow/shrink font -->
<path d="M250.6 19.5 L254.2 9.8 L257.8 19.5 M251.9 16.2 L256.5 16.2" stroke="#444" stroke-width="1"/>
<path d="M258.3 11.3 L259.6 10 L260.9 11.3" stroke="#3a8fdc" stroke-width="0.9"/>
<path d="M270.4 19.5 L273.4 12 L276.4 19.5 M271.4 16.9 L275.4 16.9" stroke="#444" stroke-width="1"/>
<path d="M277 10.6 L278.2 11.8 L279.4 10.6" stroke="#3a8fdc" stroke-width="0.9"/>
<!-- B I U -->
<path d="M134.6 34.3 L137.6 34.3 Q139.4 34.3 139.4 36.2 Q139.4 37.4 137.6 37.5 Q139.8 37.6 139.8 39.2 Q139.8 40.8 137.8 40.8 L134.6 40.8 Z M134.6 37.5 L137.6 37.5" stroke="#333" stroke-width="1.3"/>
<path d="M154 34.3 L157.4 34.3 M153 40.8 L156.4 40.8 M155.9 34.3 L154.5 40.8" stroke="#444" stroke-width="0.9"/>
<path d="M170.2 34.2 L170.2 38.5 Q170.2 40.6 172.6 40.6 Q175 40.6 175 38.5 L175 34.2 M169.6 42.4 L175.6 42.4" stroke="#444" stroke-width="0.9"/>
<g stroke="#444" stroke-width="1.1">
<path d="M183.9 37.4 L185.8 39.3 L187.7 37.4"/><path d="M214.7 37.4 L216.6 39.3 L218.5 37.4"/>
<path d="M245.5 37.4 L247.4 39.3 L249.3 37.4"/><path d="M274.1 37.4 L276 39.3 L277.9 37.4"/>
<path d="M367.8 15.3 L369.8 17.3 L371.8 15.3"/><path d="M524 37 L525.5 38.6 L527 37"/>
<path d="M483 37.5 L485 39.5 L487 37.5"/>
<path d="M1127.4 44.8 L1129.3 46.5 L1131.2 44.8"/><path d="M1157.8 44.8 L1159.8 46.5 L1161.8 44.8"/><path d="M1188.5 44.2 L1190.5 46 L1192.5 44.2"/>
<path d="M1281.3 10 L1283.3 11.8 L1285.3 10"/><path d="M1247.3 28 L1249.2 29.8 L1251.1 28"/><path d="M1255.5 46.2 L1257.5 48 L1259.5 46.2"/>
<path d="M662.2 44.6 L663.9 46.2 L665.6 44.6"/><path d="M699.2 44.6 L700.9 46.2 L702.6 44.6"/>
<path d="M1316.8 44.8 L1318.5 46.4 L1320.2 44.8"/><path d="M1350.3 44.8 L1352 46.4 L1353.7 44.8"/>
<path d="M21.6 45 L23.4 46.8 L25.2 45"/>
</g>
<!-- borders icon -->
<rect x="198.5" y="33.2" width="10" height="9.6" stroke="#8a8a8a" stroke-width="0.8"/>
<path d="M203.5 33.2 L203.5 42.8 M198.5 38 L208.5 38" stroke="#8a8a8a" stroke-width="0.8"/>
<path d="M198.2 42.8 L208.8 42.8" stroke="#555" stroke-width="1.2"/>
<!-- fill color -->
<path d="M231.5 37.2 L234.6 33.6 L238.4 37.4 L235 40.2 Z" fill="#fff" stroke="#444" stroke-width="0.9"/>
<path d="M238.6 37 Q239.8 35.2 238.6 34.2" stroke="#1f6fb8" stroke-width="1.1"/>
<rect x="228.9" y="41" width="11.2" height="2.8" fill="#ffff00" stroke="none"/>
<!-- font color -->
<path d="M259.8 40.4 L263.2 33.2 L266.6 40.4 M261.1 37.7 L265.3 37.7" stroke="#444" stroke-width="0.9"/>
<rect x="257.4" y="41" width="11.4" height="2.8" fill="#ee1111" stroke="none"/>
<!-- top/middle/bottom align -->
<g stroke="#555" stroke-width="1">
<path d="M297 10.3 H306.3 M298.7 13.3 H305 M297 16.5 H306.3"/>
<path d="M314.9 12.6 H324.5 M316.6 15.5 H322.8 M314.9 18.4 H324.5"/>
</g>
<rect x="330.2" y="7.6" width="15.2" height="16.7" rx="3" fill="#ececec" stroke="#8a8a8a" stroke-width="1.1"/>
<g stroke="#555" stroke-width="1">
<path d="M332.8 15.3 H342.7 M334.4 18.2 H341.1 M332.8 21.3 H342.7"/>
<!-- left center right -->
<path d="M296.9 33.6 H306.3 M296.9 36.5 H303.7 M296.9 39.4 H306.3 M296.9 42.4 H303.7"/>
<path d="M314.9 33.6 H324.6 M316.3 36.5 H323 M314.9 39.4 H324.6 M316.3 42.4 H323"/>
<path d="M333 33.6 H342.9 M336 36.5 H342.9 M333 39.4 H342.9 M336 42.4 H342.9"/>
<!-- indents -->
<path d="M353.1 33.6 H362.9 M359.2 36.5 H362.9 M359.2 39.4 H362.9 M353.1 42.4 H362.9"/>
<path d="M371.2 33.6 H381.1 M377.3 36.5 H381.1 M377.3 39.4 H381.1 M371.2 42.4 H381.1"/>
</g>
<path d="M353.2 38 L356.4 36 L356.4 40 Z" fill="#2a8ad8" stroke="#2a8ad8" stroke-width="0.6"/><path d="M356 38 H357.6" stroke="#8cc0ee" stroke-width="1.6"/>
<path d="M375.6 38 L372.4 36 L372.4 40 Z" fill="#2a8ad8" stroke="#2a8ad8" stroke-width="0.6"/><path d="M371.2 38 H372.8" stroke="#8cc0ee" stroke-width="1.6"/>
<!-- orientation -->
<text x="0" y="0" transform="translate(354.6,18.6) rotate(-45)" font-family="Liberation Sans" font-size="7.6" fill="#444">ab</text>
<path d="M356.2 20.7 L362.4 14.6" stroke="#2a8ad8" stroke-width="1.1"/>
<path d="M364 13 L359.8 13.9 L363.1 17.2 Z" fill="#2a8ad8"/>
<!-- wrap text -->
<text x="397.6" y="15.8" font-family="Liberation Sans" font-size="6.6" fill="#444">ab</text>
<text x="397.8" y="20.8" font-family="Liberation Sans" font-size="6.6" fill="#444">c</text>
<path d="M407.4 16.2 Q408.4 19.4 404.4 19.8 L402.8 19.8" stroke="#2a8ad8" stroke-width="1.1"/>
<path d="M402 19.8 L404.2 18 L404.2 21.6 Z" fill="#2a8ad8"/>
<!-- merge -->
<rect x="396.8" y="33.3" width="9.9" height="9.5" rx="0.8" fill="#fff" stroke="#555" stroke-width="1"/>
<path d="M396.8 35 V41 M406.7 35 V41" stroke="#2a8ad8" stroke-width="1.2"/>
<rect x="397.6" y="35.2" width="8.3" height="5.6" fill="#fff" stroke="#2a8ad8" stroke-width="0.9"/>
<path d="M399.4 38 H404" stroke="#9cc8ef" stroke-width="1"/>
<path d="M398.2 38 L400 36.6 V39.4 Z M405.3 38 L403.5 36.6 V39.4 Z" fill="#2a8ad8" stroke="#2a8ad8" stroke-width="0.6"/>
<path d="M401.8 33.3 V35 M401.8 41 V42.8" stroke="#999" stroke-width="0.7"/>
<!-- accounting -->
<rect x="506.6" y="35" width="9.6" height="6.4" fill="#f2f2f2" stroke="#666" stroke-width="0.9"/>
<text x="507.4" y="40.4" font-family="Liberation Sans" font-size="5" fill="#555">KC</text>
<rect x="512.2" y="38.4" width="5.8" height="5" fill="#fff" stroke="#ef8a1c" stroke-width="1"/>
<path d="M512.6 40.9 H517.6" stroke="#ef8a1c" stroke-width="0.9"/>
<!-- percent comma -->
<text x="535" y="43.4" font-family="Liberation Sans" font-size="12.6" fill="#4a4a4a" transform="translate(-16.3 0) scale(1.03 1)">%</text>
<circle cx="559.7" cy="37.4" r="1.9" fill="#2a2a2a"/><path d="M561.2 37.6 Q561.8 41.2 557.8 43" stroke="#2a2a2a" stroke-width="1.3"/>
<!-- increase/decrease decimal -->
<path d="M574.6 35.6 H579.6 M576.6 33.6 L574.6 35.6 L576.6 37.6" stroke="#2a8ad8" stroke-width="1"/>
<text x="579.4" y="38.6" font-family="Liberation Sans" font-size="6" fill="#555">.0</text>
<text x="575.8" y="43.8" font-family="Liberation Sans" font-size="6" fill="#555">.00</text>
<text x="594.4" y="38.6" font-family="Liberation Sans" font-size="6" fill="#555">.00</text>
<path d="M591.8 40.8 H597.4 M595.4 38.8 L597.4 40.8 L595.4 42.8" stroke="#2a8ad8" stroke-width="1"/>
<text x="597.6" y="43.8" font-family="Liberation Sans" font-size="6" fill="#555">.0</text>
<!-- conditional formatting -->
<rect x="636.9" y="8" width="8.8" height="5" fill="#f47a8a" stroke="#e8333f" stroke-width="0.8"/>
<rect x="636.9" y="13" width="5.8" height="3.8" fill="#7cb8ec" stroke="#2a8ad8" stroke-width="0.8"/>
<rect x="636.9" y="17.6" width="9.9" height="5" fill="#f47a8a" stroke="#e8333f" stroke-width="0.8"/>
<rect x="633.6" y="7.6" width="19" height="15" rx="1" stroke="#555" stroke-width="1"/>
<path d="M647.7 7.6 V22.6 M633.6 12.8 H636.9 M646.8 12.8 H652.6 M633.6 17.5 H636.9 M646.8 17.5 H652.6" stroke="#777" stroke-width="0.7"/>
<!-- format as table -->
<rect x="687.2" y="12.4" width="12.8" height="10.3" fill="#62aaea" stroke="#2a8ad8" stroke-width="0.8"/>
<path d="M688.4 15 H699 M688.4 20 H699 M693.3 13 V22" stroke="#cfe6fa" stroke-width="0.6" stroke-dasharray="1.6 0.8"/>
<rect x="680.8" y="7.6" width="19.2" height="15" rx="1" stroke="#555" stroke-width="1"/>
<path d="M687.2 7.6 V22.6 M693.3 7.6 V12.4 M680.8 12.4 H700 M680.8 17.4 H687.2" stroke="#666" stroke-width="0.8"/>
<path d="M683.4 10 H686 M689 10 H692 M695 10 H698.4 M682.4 15 H686 M682.4 20 H686" stroke="#bbb" stroke-width="0.5"/>
<path d="M701.2 13 L691 23.2" stroke="#444" stroke-width="2.6" stroke-linecap="round"/>
<path d="M701 13.2 L691.2 23" stroke="#fff" stroke-width="1.2" stroke-linecap="round"/>
<path d="M691.8 22.2 Q691.6 25.6 687.4 25.8 Q686.6 25.6 687.2 25 Q689 23.6 689.6 21.6 Z" fill="#1f78d1" stroke="#1f78d1" stroke-width="0.6"/>
<!-- insert -->
<rect x="1119.6" y="7.9" width="19.4" height="14.6" rx="1" stroke="#555" stroke-width="1"/>
<path d="M1126.4 7.9 V22.5 M1132.5 7.9 V22.5 M1119.6 12.2 H1139 M1119.6 17.6 H1139" stroke="#666" stroke-width="0.8"/>
<rect x="1122.6" y="12.6" width="18" height="4.8" fill="#2f86d6" stroke="none"/><path d="M1124 14.2 H1139.4 M1124 15.9 H1139.4" stroke="#a9d0f3" stroke-width="0.6" stroke-dasharray="2.2 1"/>
<path d="M1123.6 10 L1118.8 15 L1123.6 20" stroke="#2f86d6" stroke-width="1.3"/>
<!-- delete -->
<rect x="1150.4" y="7.9" width="19.4" height="14.6" rx="1" stroke="#555" stroke-width="1"/>
<path d="M1157.2 7.9 V22.5 M1163.3 7.9 V22.5 M1150.4 12.2 H1169.8 M1150.4 17.6 H1169.8" stroke="#666" stroke-width="0.8"/>
<path d="M1150.6 12.6 H1162.4 L1164.6 15 L1162.4 17.4 H1150.6 Z" fill="#2f86d6" stroke="none"/><path d="M1152 14.2 H1161.6 M1152 15.9 H1161.6" stroke="#a9d0f3" stroke-width="0.6" stroke-dasharray="2.2 1"/>
<path d="M1163.4 11.8 L1170.6 19.4 M1170.6 11.8 L1163.4 19.4" stroke="#f0424f" stroke-width="1"/>
<!-- format -->
<rect x="1181.4" y="7.9" width="19.4" height="14.6" rx="1" stroke="#555" stroke-width="1"/>
<path d="M1186.6 7.9 V22.5 M1195.8 7.9 V22.5 M1181.4 12.2 H1200.8 M1181.4 17.6 H1200.8" stroke="#666" stroke-width="0.8"/>
<rect x="1186.6" y="12.4" width="9.2" height="5" fill="#2f86d6" stroke="none"/><path d="M1187.6 14.1 H1195 M1187.6 15.8 H1195" stroke="#a9d0f3" stroke-width="0.6"/>
<rect x="1185" y="4.4" width="11.8" height="1.4" fill="#2f86d6" stroke="none"/>
<!-- sigma -->
<path d="M1230 6.6 V5.8 H1222 L1226.4 10.4 L1222 14.8 H1230 V14" stroke="#444" stroke-width="1"/>
<!-- fill -->
<rect x="1220.6" y="24" width="10.6" height="9.6" rx="0.8" fill="#fff" stroke="#666" stroke-width="0.9"/>
<path d="M1220.6 24.8 H1231.2" stroke="#666" stroke-width="1.6"/>
<path d="M1225.9 26.6 V31.2 M1223.8 29.2 L1225.9 31.3 L1228 29.2" stroke="#2a8ad8" stroke-width="1"/>
<!-- clear eraser -->
<path d="M1221 46.6 L1226.6 41.6 L1230.8 45.8 L1225.2 50.8 Z" fill="#fff" stroke="#b146c2" stroke-width="1"/>
<path d="M1221 46.6 L1223.6 44.3 L1227.8 48.5 L1225.2 50.8 Z" fill="#c77ad6" stroke="#b146c2" stroke-width="1"/>
<!-- sort -->
<text x="1298" y="14.4" font-family="Liberation Sans" font-size="10.4" fill="#2a8ad8">A</text>
<text x="1298.2" y="24.4" font-family="Liberation Sans" font-size="10.4" fill="#444">Z</text>
<path d="M1307 10.6 H1317.6 L1313.6 15.6 V21.4 H1311 V15.6 Z" fill="#fff" stroke="#444" stroke-width="0.9"/>
<!-- find -->
<circle cx="1342.5" cy="12.6" r="6.9" fill="#f6f6f6" stroke="#555" stroke-width="1"/>
<path d="M1337.6 17.8 L1330.2 25.4" stroke="#555" stroke-width="1"/>
<!-- add-ins -->
<rect x="1374.4" y="5.6" width="19.2" height="19.2" rx="1.6" fill="#fff" stroke="#e2573a" stroke-width="1.3"/>
<g fill="none" stroke="#e2573a" stroke-width="1">
<rect x="1377.2" y="8.2" width="6" height="6"/><rect x="1385" y="8.2" width="6" height="6"/>
<rect x="1377.2" y="16.2" width="6" height="6"/><rect x="1385" y="16.2" width="6" height="6"/>
</g>
<!-- formula bar -->
<path d="M60.6 83.2 L63.9 86.6 L67.2 83.2" stroke="#333" stroke-width="1.1"/>
<circle cx="78.9" cy="80.8" r="0.85" fill="#333"/><circle cx="78.9" cy="83.6" r="0.85" fill="#333"/><circle cx="78.9" cy="86.4" r="0.85" fill="#333"/>
<path d="M91 80 L99 87.8 M99 80 L91 87.8" stroke="#b0b0b0" stroke-width="0.8"/>
<path d="M106.2 83.2 L110 86.9 L116.9 80" stroke="#b0b0b0" stroke-width="0.8"/>
<text x="123.4" y="87.6" font-family="Liberation Serif" font-style="italic" font-size="11.6" fill="#333" stroke="#333" stroke-width="0.3" textLength="10.4" lengthAdjust="spacingAndGlyphs">fx</text>
<path d="M137.2 82.5 L140.6 85.8 L144 82.5" stroke="#aaa" stroke-width="0.8"/>
</g>
</svg>

<div class="t" style="left:56.57px;top:6.86px;font-size:8.41px;line-height:8.41px;transform:scaleX(1.0310);color:#262626;font-weight:normal;font-style:normal;">Cut</div>
<div class="t" style="left:56.58px;top:24.86px;font-size:8.41px;line-height:8.41px;transform:scaleX(0.9914);color:#262626;font-weight:normal;font-style:normal;">Copy</div>
<div class="t" style="left:56.34px;top:42.86px;font-size:8.41px;line-height:8.41px;transform:scaleX(0.9816);color:#262626;font-weight:normal;font-style:normal;">Format Painter</div>
<div class="t" style="left:13.56px;top:30.26px;font-size:8.41px;line-height:8.41px;transform:scaleX(0.9449);color:#262626;font-weight:normal;font-style:normal;">Paste</div>
<div class="t" style="left:39.38px;top:57.76px;font-size:8.41px;line-height:8.41px;transform:scaleX(1.0071);color:#3b3b3b;font-weight:normal;font-style:normal;">Clipboard</div>
<div class="t" style="left:130.37px;top:11.16px;font-size:8.99px;line-height:8.99px;transform:scaleX(0.9533);color:#262626;font-weight:normal;font-style:normal;">Calibri</div>
<div class="t" style="left:218.20px;top:11.16px;font-size:8.99px;line-height:8.99px;transform:scaleX(0.8316);color:#262626;font-weight:normal;font-style:normal;">11</div>
<div class="t" style="left:191.14px;top:57.56px;font-size:8.41px;line-height:8.41px;transform:scaleX(0.9841);color:#3b3b3b;font-weight:normal;font-style:normal;">Font</div>
<div class="t" style="left:410.62px;top:12.16px;font-size:8.99px;line-height:8.99px;transform:scaleX(0.8953);color:#262626;font-weight:normal;font-style:normal;">Wrap Text</div>
<div class="t" style="left:410.02px;top:34.36px;font-size:8.99px;line-height:8.99px;transform:scaleX(0.9402);color:#262626;font-weight:normal;font-style:normal;">Merge &amp; Center</div>
<div class="t" style="left:369.00px;top:57.86px;font-size:8.41px;line-height:8.41px;transform:scaleX(0.9592);color:#3b3b3b;font-weight:normal;font-style:normal;">Alignment</div>
<div class="t" style="left:505.80px;top:11.36px;font-size:8.99px;line-height:8.99px;transform:scaleX(0.8961);color:#262626;font-weight:normal;font-style:normal;">General</div>
<div class="t" style="left:534.05px;top:57.96px;font-size:8.41px;line-height:8.41px;transform:scaleX(0.9730);color:#3b3b3b;font-weight:normal;font-style:normal;">Number</div>
<div class="t" style="left:621.06px;top:29.76px;font-size:8.99px;line-height:8.99px;transform:scaleX(0.9741);color:#262626;font-weight:normal;font-style:normal;">Conditional</div>
<div class="t" style="left:618.10px;top:40.66px;font-size:8.99px;line-height:8.99px;transform:scaleX(0.9783);color:#262626;font-weight:normal;font-style:normal;">Formatting</div>
<div class="t" style="left:671.95px;top:29.76px;font-size:8.99px;line-height:8.99px;transform:scaleX(0.9096);color:#262626;font-weight:normal;font-style:normal;">Format as</div>
<div class="t" style="left:677.43px;top:40.66px;font-size:8.99px;line-height:8.99px;transform:scaleX(0.9266);color:#262626;font-weight:normal;font-style:normal;">Table</div>
<div class="t" style="left:718.79px;top:14.66px;font-size:8.99px;line-height:8.99px;transform:scaleX(1.1310);color:#000;font-weight:normal;font-style:normal;">Normal</div>
<div class="t" style="left:792.65px;top:14.66px;font-size:8.99px;line-height:8.99px;transform:scaleX(1.0378);color:#9c0006;font-weight:normal;font-style:normal;">Bad</div>
<div class="t" style="left:866.72px;top:14.66px;font-size:8.99px;line-height:8.99px;transform:scaleX(1.0747);color:#006100;font-weight:normal;font-style:normal;">Good</div>
<div class="t" style="left:940.47px;top:14.66px;font-size:8.99px;line-height:8.99px;transform:scaleX(1.1563);color:#9c5700;font-weight:normal;font-style:normal;">Neutral</div>
<div class="t" style="left:1014.64px;top:14.66px;font-size:8.99px;line-height:8.99px;transform:scaleX(1.0077);color:#fa7d00;font-weight:bold;font-style:normal;">Calculation</div>
<div class="t" style="left:719.25px;top:34.16px;font-size:8.99px;line-height:8.99px;transform:scaleX(0.9727);color:#ffffff;font-weight:bold;font-style:normal;">Check Cell</div>
<div class="t" style="left:793.11px;top:34.16px;font-size:8.99px;line-height:8.99px;transform:scaleX(1.0826);color:#7f7f7f;font-weight:normal;font-style:italic;">Explanatory ...</div>
<div class="t" style="left:866.25px;top:34.66px;font-size:8.99px;line-height:8.99px;transform:scaleX(1.1756);color:#3f3f76;font-weight:normal;font-style:normal;">Input</div>
<div class="t" style="left:940.52px;top:34.66px;font-size:8.99px;line-height:8.99px;transform:scaleX(1.0828);color:#fa7d00;font-weight:normal;font-style:normal;">Linked Cell</div>
<div class="t" style="left:1014.77px;top:34.66px;font-size:8.99px;line-height:8.99px;transform:scaleX(1.1576);color:#000;font-weight:normal;font-style:normal;">Note</div>
<div class="t" style="left:850.13px;top:57.86px;font-size:8.41px;line-height:8.41px;transform:scaleX(0.8742);color:#3b3b3b;font-weight:normal;font-style:normal;">Styles</div>
<div class="t" style="left:1118.15px;top:30.41px;font-size:8.70px;line-height:8.70px;transform:scaleX(0.9631);color:#262626;font-weight:normal;font-style:normal;">Insert</div>
<div class="t" style="left:1148.15px;top:30.41px;font-size:8.70px;line-height:8.70px;transform:scaleX(0.9341);color:#262626;font-weight:normal;font-style:normal;">Delete</div>
<div class="t" style="left:1177.23px;top:29.51px;font-size:8.70px;line-height:8.70px;transform:scaleX(0.9670);color:#262626;font-weight:normal;font-style:normal;">Format</div>
<div class="t" style="left:1151.83px;top:57.66px;font-size:8.41px;line-height:8.41px;transform:scaleX(0.8839);color:#3b3b3b;font-weight:normal;font-style:normal;">Cells</div>
<div class="t" style="left:1234.00px;top:6.71px;font-size:8.70px;line-height:8.70px;transform:scaleX(0.9938);color:#262626;font-weight:normal;font-style:normal;">AutoSum</div>
<div class="t" style="left:1233.92px;top:25.01px;font-size:8.70px;line-height:8.70px;transform:scaleX(0.9770);color:#262626;font-weight:normal;font-style:normal;">Fill</div>
<div class="t" style="left:1234.21px;top:42.91px;font-size:8.70px;line-height:8.70px;transform:scaleX(0.8922);color:#262626;font-weight:normal;font-style:normal;">Clear</div>
<div class="t" style="left:1295.97px;top:30.01px;font-size:8.70px;line-height:8.70px;transform:scaleX(0.9845);color:#262626;font-weight:normal;font-style:normal;">Sort &amp;</div>
<div class="t" style="left:1294.51px;top:41.11px;font-size:8.70px;line-height:8.70px;transform:scaleX(0.9880);color:#262626;font-weight:normal;font-style:normal;">Filter</div>
<div class="t" style="left:1327.19px;top:30.01px;font-size:8.70px;line-height:8.70px;transform:scaleX(1.0140);color:#262626;font-weight:normal;font-style:normal;">Find &amp;</div>
<div class="t" style="left:1325.50px;top:41.11px;font-size:8.70px;line-height:8.70px;transform:scaleX(0.9132);color:#262626;font-weight:normal;font-style:normal;">Select</div>
<div class="t" style="left:1370.00px;top:30.01px;font-size:8.70px;line-height:8.70px;transform:scaleX(0.9921);color:#262626;font-weight:normal;font-style:normal;">Add-ins</div>
<div class="t" style="left:1273.71px;top:57.96px;font-size:8.41px;line-height:8.41px;transform:scaleX(1.0220);color:#3b3b3b;font-weight:normal;font-style:normal;">Editing</div>
<div class="t" style="left:1370.90px;top:57.96px;font-size:8.41px;line-height:8.41px;transform:scaleX(0.9837);color:#3b3b3b;font-weight:normal;font-style:normal;">Add-ins</div>
<div class="t" style="left:5.06px;top:79.27px;font-size:9.57px;line-height:9.57px;transform:scaleX(0.9650);color:#1f1f1f;font-weight:normal;font-style:normal;">N4</div>
<div class="t" style="left:126.80px;top:122.24px;font-size:27.25px;line-height:27.25px;transform:scaleX(0.8890);color:#000;font-weight:bold;font-style:normal;">BREAKPOINT WORK</div>
<div class="t" style="left:70.23px;top:160.14px;font-size:27.25px;line-height:27.25px;transform:scaleX(0.9395);color:#000;font-weight:bold;font-style:normal;">AI WORK OPTIMIZATION</div>
<div class="t" style="left:175.78px;top:197.64px;font-size:27.25px;line-height:27.25px;transform:scaleX(0.8756);color:#000;font-weight:bold;font-style:normal;">SYSTEM</div>
<div class="t" style="left:33.92px;top:247.93px;font-size:18.55px;line-height:18.55px;transform:scaleX(0.9826);color:#000;font-weight:bold;font-style:normal;">Reduce workload. Increase clarity. Stay safe</div>
<div class="t" style="left:87.24px;top:316.03px;font-size:18.55px;line-height:18.55px;transform:scaleX(0.8749);color:#000;font-weight:bold;font-style:normal;">This is NOT about replacing people.</div>
<div class="t" style="left:63.44px;top:366.63px;font-size:18.55px;line-height:18.55px;transform:scaleX(0.8820);color:#000;font-weight:bold;font-style:normal;">This is NOT about automating everything.</div>
<div class="t" style="left:33.24px;top:416.93px;font-size:18.55px;line-height:18.55px;transform:scaleX(0.8836);color:#000;font-weight:bold;font-style:normal;">This system identifies where AI is actually useful.</div>
<div class="t" style="left:115.67px;top:476.43px;font-size:18.55px;line-height:18.55px;transform:scaleX(0.8893);color:#000;font-weight:bold;font-style:normal;">You describe your real work</div>
<div class="t" style="left:117.24px;top:527.33px;font-size:18.55px;line-height:18.55px;transform:scaleX(0.8801);color:#000;font-weight:bold;font-style:normal;">The system finds time leaks</div>
<div class="t" style="left:59.30px;top:577.33px;font-size:18.55px;line-height:18.55px;transform:scaleX(0.8900);color:#000;font-weight:bold;font-style:normal;">AI is applied only where safe and effective</div>
<div class="t" style="left:204.85px;top:629.63px;font-size:18.55px;line-height:18.55px;transform:scaleX(0.8884);color:#000;font-weight:bold;font-style:normal;">Rule:</div>
<div class="t" style="left:53.76px;top:679.93px;font-size:18.55px;line-height:18.55px;transform:scaleX(0.8759);color:#000;font-weight:bold;font-style:normal;">If a task is critical or risky — it stays human.</div>
<div class="t" style="left:81.74px;top:883.55px;font-size:10.29px;line-height:10.29px;transform:scaleX(0.8918);color:#242424;font-weight:normal;font-style:normal;-webkit-text-stroke:0.22px #242424;">START – HOW TO USE THIS SYSTEM</div>
<div class="t" style="left:262.13px;top:885.35px;font-size:10.29px;line-height:10.29px;transform:scaleX(0.8410);color:#333;font-weight:normal;font-style:normal;">YOUR JOB CONTEXT (REALITY CHECK</div>
<div class="t" style="left:445.83px;top:885.35px;font-size:10.29px;line-height:10.29px;transform:scaleX(0.8458);color:#333;font-weight:normal;font-style:normal;">TASK INVENTORY (CORE SHEET)</div>
<div class="t" style="left:608.40px;top:885.35px;font-size:10.29px;line-height:10.29px;transform:scaleX(0.8642);color:#333;font-weight:normal;font-style:normal;">AI SUITABILITY FILTER (MOST IMP</div>
<div class="t" style="left:50.67px;top:102.18px;font-size:12.61px;line-height:12.61px;transform:scaleX(0.8600);color:#444;font-weight:normal;font-style:normal;">A</div>
<div class="t" style="left:114.01px;top:102.18px;font-size:12.61px;line-height:12.61px;transform:scaleX(0.8600);color:#444;font-weight:normal;font-style:normal;">B</div>
<div class="t" style="left:177.29px;top:102.18px;font-size:12.61px;line-height:12.61px;transform:scaleX(0.8600);color:#444;font-weight:normal;font-style:normal;">C</div>
<div class="t" style="left:240.68px;top:102.18px;font-size:12.61px;line-height:12.61px;transform:scaleX(0.8600);color:#444;font-weight:normal;font-style:normal;">D</div>
<div class="t" style="left:348.35px;top:102.18px;font-size:12.61px;line-height:12.61px;transform:scaleX(0.8600);color:#444;font-weight:normal;font-style:normal;">E</div>
<div class="t" style="left:456.03px;top:102.18px;font-size:12.61px;line-height:12.61px;transform:scaleX(0.8600);color:#444;font-weight:normal;font-style:normal;">F</div>
<div class="t" style="left:518.98px;top:102.18px;font-size:12.61px;line-height:12.61px;transform:scaleX(0.8600);color:#444;font-weight:normal;font-style:normal;">G</div>
<div class="t" style="left:582.65px;top:102.18px;font-size:12.61px;line-height:12.61px;transform:scaleX(0.8600);color:#444;font-weight:normal;font-style:normal;">H</div>
<div class="t" style="left:648.53px;top:102.18px;font-size:12.61px;line-height:12.61px;transform:scaleX(0.8600);color:#444;font-weight:normal;font-style:normal;">I</div>
<div class="t" style="left:711.11px;top:102.18px;font-size:12.61px;line-height:12.61px;transform:scaleX(0.8600);color:#444;font-weight:normal;font-style:normal;">J</div>
<div class="t" style="left:773.09px;top:102.18px;font-size:12.61px;line-height:12.61px;transform:scaleX(0.8600);color:#444;font-weight:normal;font-style:normal;">K</div>
<div class="t" style="left:837.30px;top:102.18px;font-size:12.61px;line-height:12.61px;transform:scaleX(0.8600);color:#444;font-weight:normal;font-style:normal;">L</div>
<div class="t" style="left:899.55px;top:102.18px;font-size:12.61px;line-height:12.61px;transform:scaleX(0.8600);color:#444;font-weight:normal;font-style:normal;">M</div>
<div class="t" style="left:963.65px;top:102.18px;font-size:12.61px;line-height:12.61px;transform:scaleX(0.8600);color:#0f6b39;font-weight:normal;font-style:normal;">N</div>
<div class="t" style="left:1026.82px;top:102.18px;font-size:12.61px;line-height:12.61px;transform:scaleX(0.8600);color:#444;font-weight:normal;font-style:normal;">O</div>
<div class="t" style="left:1090.81px;top:102.18px;font-size:12.61px;line-height:12.61px;transform:scaleX(0.8600);color:#444;font-weight:normal;font-style:normal;">P</div>
<div class="t" style="left:1153.82px;top:102.18px;font-size:12.61px;line-height:12.61px;transform:scaleX(0.8600);color:#444;font-weight:normal;font-style:normal;">Q</div>
<div class="t" style="left:1217.48px;top:102.18px;font-size:12.61px;line-height:12.61px;transform:scaleX(0.8600);color:#444;font-weight:normal;font-style:normal;">R</div>
<div class="t" style="left:1281.42px;top:102.18px;font-size:12.61px;line-height:12.61px;transform:scaleX(0.8600);color:#444;font-weight:normal;font-style:normal;">S</div>
<div class="t" style="left:1345.24px;top:102.18px;font-size:12.61px;line-height:12.61px;transform:scaleX(0.8600);color:#444;font-weight:normal;font-style:normal;">T</div>
<div class="t" style="left:1408.09px;top:102.18px;font-size:12.61px;line-height:12.61px;transform:scaleX(0.8600);color:#444;font-weight:normal;font-style:normal;">U</div>
<div class="t" style="left:4.26px;top:212.72px;font-size:13.62px;line-height:13.62px;transform:scaleX(1.1048);color:#444;font-weight:normal;font-style:normal;">1</div>
<div class="t" style="left:4.49px;top:268.82px;font-size:13.62px;line-height:13.62px;transform:scaleX(1.1048);color:#444;font-weight:normal;font-style:normal;">2</div>
<div class="t" style="left:4.56px;top:288.82px;font-size:13.62px;line-height:13.62px;transform:scaleX(1.1048);color:#444;font-weight:normal;font-style:normal;">3</div>
<div class="t" style="left:4.56px;top:431.02px;font-size:13.62px;line-height:13.62px;transform:scaleX(1.1048);color:#0f6b39;font-weight:normal;font-style:normal;">4</div>
<div class="t" style="left:4.56px;top:450.42px;font-size:13.62px;line-height:13.62px;transform:scaleX(1.1048);color:#444;font-weight:normal;font-style:normal;">5</div>
<div class="t" style="left:4.49px;top:590.02px;font-size:13.62px;line-height:13.62px;transform:scaleX(1.1048);color:#444;font-weight:normal;font-style:normal;">6</div>
<div class="t" style="left:4.49px;top:608.92px;font-size:13.62px;line-height:13.62px;transform:scaleX(1.1048);color:#444;font-weight:normal;font-style:normal;">7</div>
<div class="t" style="left:4.56px;top:687.12px;font-size:13.62px;line-height:13.62px;transform:scaleX(1.1048);color:#444;font-weight:normal;font-style:normal;">8</div>
<div class="t" style="left:4.49px;top:706.72px;font-size:13.62px;line-height:13.62px;transform:scaleX(1.1048);color:#444;font-weight:normal;font-style:normal;">9</div>
<div class="t" style="left:0.85px;top:726.32px;font-size:13.62px;line-height:13.62px;transform:scaleX(1.1048);color:#444;font-weight:normal;font-style:normal;">10</div>
<div class="t" style="left:1.45px;top:745.92px;font-size:13.62px;line-height:13.62px;transform:scaleX(1.1048);color:#444;font-weight:normal;font-style:normal;">11</div>
<div class="t" style="left:0.92px;top:765.52px;font-size:13.62px;line-height:13.62px;transform:scaleX(1.1048);color:#444;font-weight:normal;font-style:normal;">12</div>
<div class="t" style="left:0.85px;top:785.12px;font-size:13.62px;line-height:13.62px;transform:scaleX(1.1048);color:#444;font-weight:normal;font-style:normal;">13</div>
<div class="t" style="left:0.77px;top:804.72px;font-size:13.62px;line-height:13.62px;transform:scaleX(1.1048);color:#444;font-weight:normal;font-style:normal;">14</div>
<div class="t" style="left:0.85px;top:824.32px;font-size:13.62px;line-height:13.62px;transform:scaleX(1.1048);color:#444;font-weight:normal;font-style:normal;">15</div>
<div class="t" style="left:0.85px;top:843.92px;font-size:13.62px;line-height:13.62px;transform:scaleX(1.1048);color:#444;font-weight:normal;font-style:normal;">16</div>
<div class="t" style="left:0.92px;top:863.52px;font-size:13.62px;line-height:13.62px;transform:scaleX(1.1048);color:#444;font-weight:normal;font-style:normal;">17</div>
</body></html>
